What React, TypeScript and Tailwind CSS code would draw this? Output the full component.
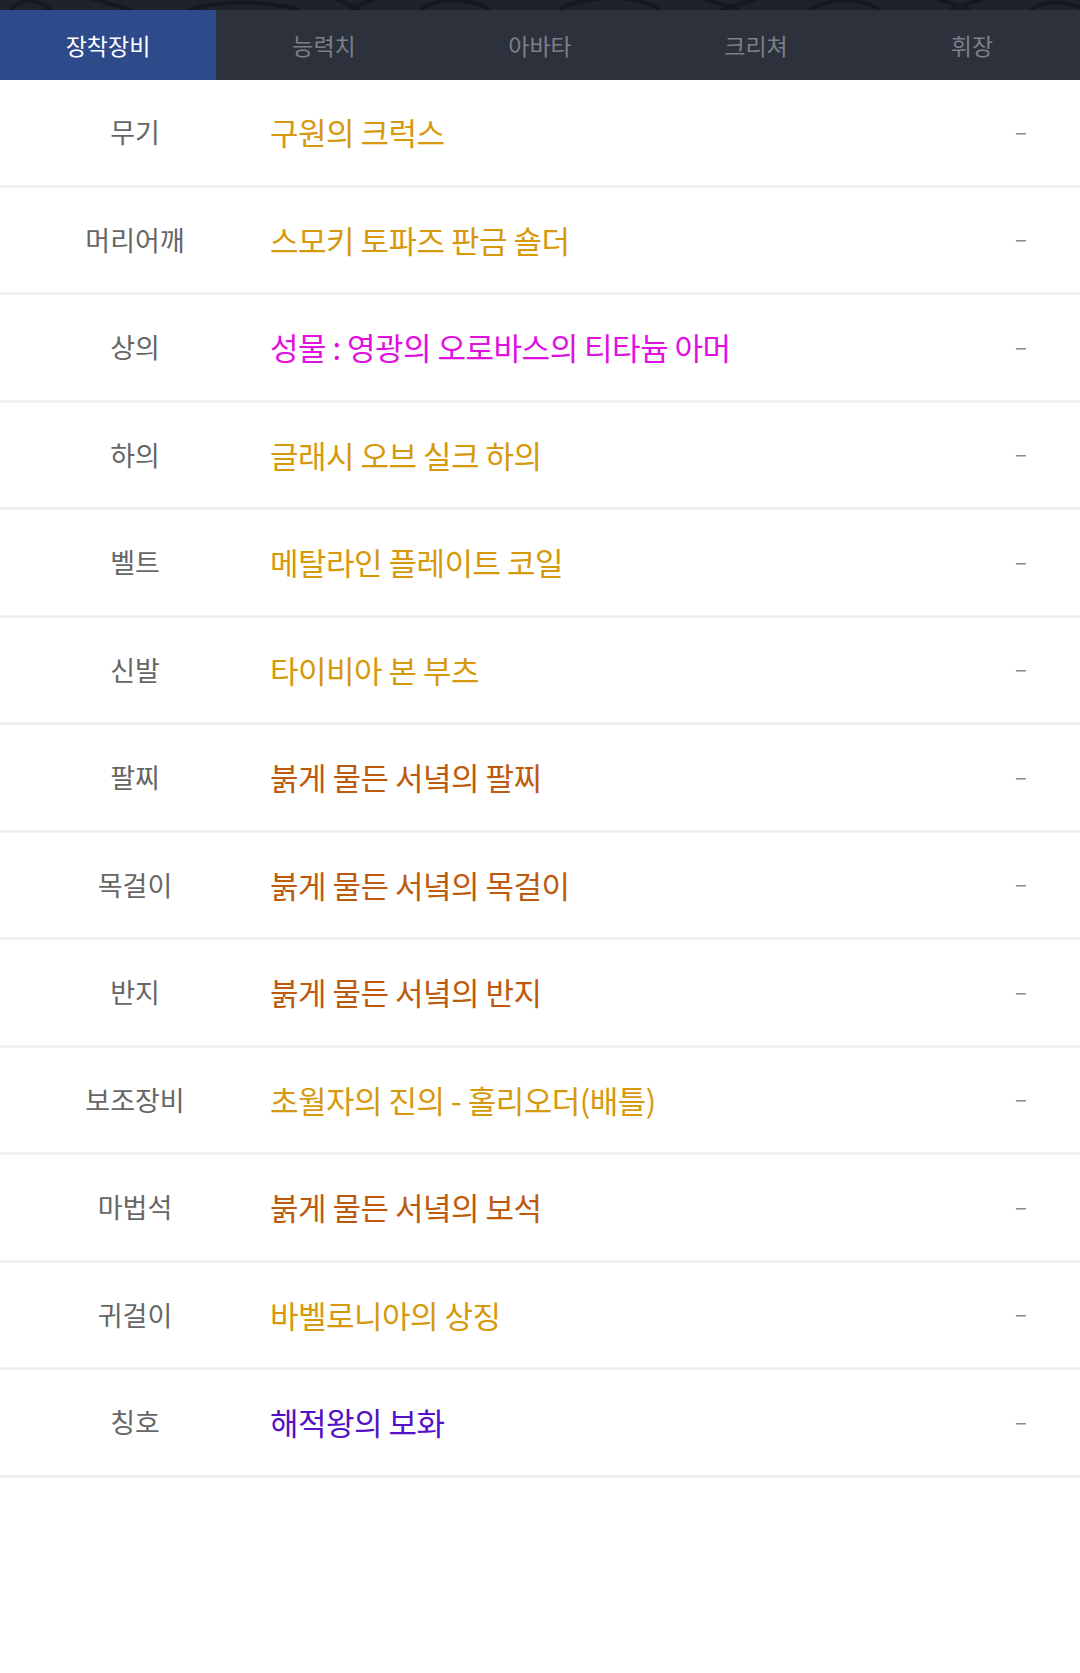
import { useState } from 'react';

const tabs = ['장착장비', '능력치', '아바타', '크리쳐', '휘장'];

const equips = [
  { slot: '무기', name: '구원의 크럭스', color: 'text-[#d6990c]' },
  { slot: '머리어깨', name: '스모키 토파즈 판금 숄더', color: 'text-[#d6990c]' },
  { slot: '상의', name: '성물 : 영광의 오로바스의 티타늄 아머', color: 'text-[#e010df]' },
  { slot: '하의', name: '글래시 오브 실크 하의', color: 'text-[#d6990c]' },
  { slot: '벨트', name: '메탈라인 플레이트 코일', color: 'text-[#d6990c]' },
  { slot: '신발', name: '타이비아 본 부츠', color: 'text-[#d6990c]' },
  { slot: '팔찌', name: '붉게 물든 서녘의 팔찌', color: 'text-[#bd5a0d]' },
  { slot: '목걸이', name: '붉게 물든 서녘의 목걸이', color: 'text-[#bd5a0d]' },
  { slot: '반지', name: '붉게 물든 서녘의 반지', color: 'text-[#bd5a0d]' },
  { slot: '보조장비', name: '초월자의 진의 - 홀리오더(배틀)', color: 'text-[#d6990c]' },
  { slot: '마법석', name: '붉게 물든 서녘의 보석', color: 'text-[#bd5a0d]' },
  { slot: '귀걸이', name: '바벨로니아의 상징', color: 'text-[#d6990c]' },
  { slot: '칭호', name: '해적왕의 보화', color: 'text-[#5310c9]' },
];

function HeaderStrip() {
  // dark banner edge peeking above the tabs
  return (
    <div className="h-[10px] bg-[#1f222a] overflow-hidden">
      <svg width="1080" height="10" viewBox="0 0 1080 10" className="block">
        <g fill="none" stroke="#141821" strokeWidth="4">
          <path d="M10 10 C20 -2 40 -2 50 10" />
          <path d="M90 -2 L130 10" />
          <path d="M190 10 C220 0 260 0 300 10" />
          <path d="M330 -4 L360 10 M380 -4 L350 10" />
          <path d="M420 10 C440 -3 470 -3 490 10" />
          <path d="M560 10 C580 -6 640 -6 660 10" />
          <path d="M700 -2 L740 10 M760 -2 L720 10" />
          <path d="M810 10 C830 -3 860 -3 880 10" />
          <path d="M930 -4 L970 10 M990 -4 L950 10" />
          <path d="M1030 10 C1045 0 1065 0 1080 8" />
        </g>
      </svg>
    </div>
  );
}

export default function App() {
  const [active, setActive] = useState(0);

  return (
    <div
      className="w-[1080px] min-h-[1673px] bg-white"
      style={{ fontFamily: '"Noto Sans CJK KR", "Noto Sans", sans-serif' }}
    >
      <HeaderStrip />
      <div className="flex h-[70px] bg-[#2c313c]">
        {tabs.map((t, i) => (
          <button
            key={t}
            onClick={() => setActive(i)}
            className={
              i === active
                ? 'flex-1 flex items-center justify-center bg-[#2d4a8a] text-white text-[23px]'
                : 'flex-1 flex items-center justify-center text-[#7b8089] text-[23px]'
            }
          >
            {t}
          </button>
        ))}
      </div>

      <div>
        {equips.map((e) => (
          <div
            key={e.slot}
            className="flex items-center h-[107.5px] border-b-[3px] border-[#f1f1f1]"
          >
            <div className="w-[270px] text-center text-[27px] text-[#666666]">{e.slot}</div>
            <div className={`flex-1 text-[31px] tracking-[-0.5px] ${e.color}`}>{e.name}</div>
            <div className="w-[118px] text-center text-[22px] text-[#8a8a8a] -mt-[4px]">–</div>
          </div>
        ))}
      </div>
    </div>
  );
}
